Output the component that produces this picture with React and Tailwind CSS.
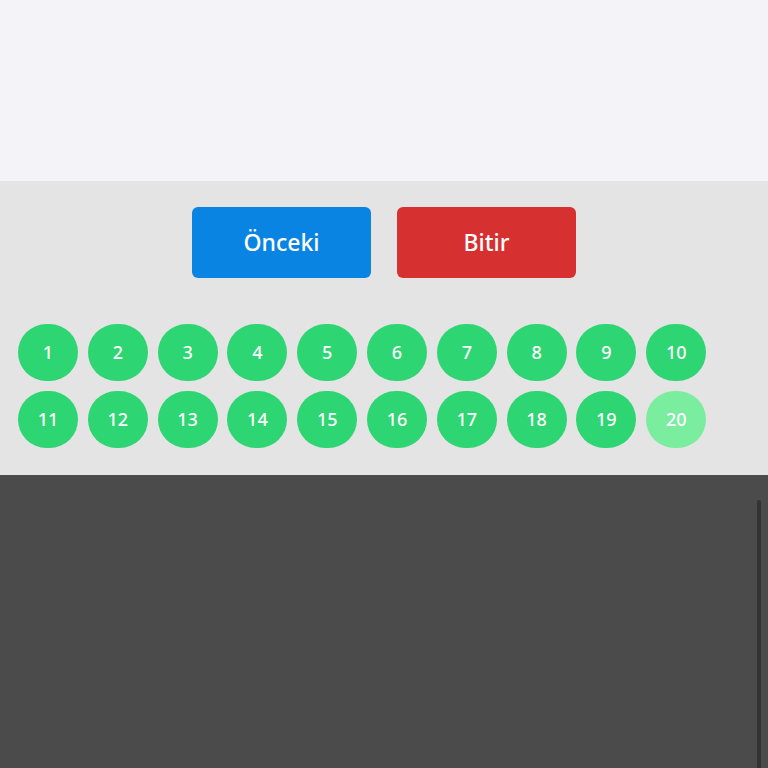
export default function App() {
  const nums = Array.from({ length: 20 }, (_, i) => i + 1);
  return (
    <div className="w-[768px] h-[768px] flex flex-col overflow-hidden" style={{ fontFamily: '"Noto Sans", Lato, sans-serif' }}>
      <div className="h-[181px] bg-[#f3f3f8]" />
      <div className="h-[294px] bg-[#e4e4e4] flex flex-col">
        <div className="flex justify-center gap-[26px] pt-[26px]">
          <button className="w-[179px] h-[71px] rounded-[6px] bg-[#0984e3] text-white text-[23px] font-medium flex items-center justify-center">Önceki</button>
          <button className="w-[179px] h-[71px] rounded-[6px] bg-[#d63031] text-white text-[23px] font-medium flex items-center justify-center">Bitir</button>
        </div>
        <div className="grid grid-cols-[repeat(10,60px)] gap-x-[9.8px] gap-y-[10px] pl-[18px] pt-[46px]">
          {nums.map((n) => (
            <div
              key={n}
              className={`w-[60px] h-[57px] rounded-full flex items-center justify-center text-white text-[18px] font-medium ${n === 20 ? 'bg-[#7bed9f]' : 'bg-[#2ed573]'}`}
            >
              {n}
            </div>
          ))}
        </div>
      </div>
      <div className="flex-1 bg-[#4b4b4b] relative">
        <div className="absolute right-[7px] top-[25px] bottom-0 w-[4px] rounded-t-full bg-[#333333]" />
      </div>
    </div>
  );
}
